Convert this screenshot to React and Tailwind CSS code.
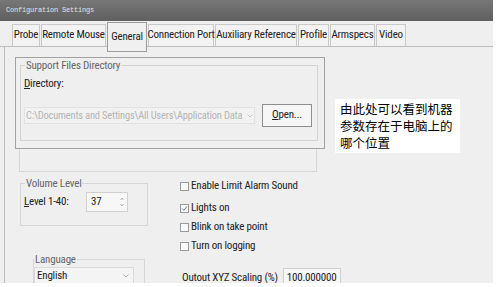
import React from "react";

const tabs = [
  ["Probe", 28],
  ["Remote Mouse", 65],
  ["General", 40],
  ["Connection Port", 66],
  ["Auxiliary Reference", 82],
  ["Profile", 31],
  ["Armspecs", 45],
  ["Video", 30],
];

function Chevron({ color = "#b8b8b8" }) {
  return (
    <svg width="6" height="4" viewBox="0 0 6 4" className="shrink-0">
      <path d="M0.5 0.5 L3 3 L5.5 0.5" fill="none" stroke={color} strokeWidth="1" />
    </svg>
  );
}

function Check({ checked, label }) {
  return (
    <div className="flex items-center h-[14px]">
      <div className="w-[9px] h-[9px] border border-[#9a9a9a] bg-[#f9f9f9] flex items-center justify-center">
        {checked && (
          <svg width="7" height="7" viewBox="0 0 7 7">
            <path d="M1 3.5 L2.8 5.3 L6 1.5" fill="none" stroke="#7a7a7a" strokeWidth="1" />
          </svg>
        )}
      </div>
      <span className="ml-[2px] text-[11px] text-[#222]">{label}</span>
    </div>
  );
}

export default function App() {
  return (
    <div className="w-[497px] h-[287px] bg-white overflow-hidden font-[family-name:'Roboto_Condensed','Liberation_Sans',sans-serif] tracking-[-0.2px]">
      <div className="w-[493px] h-[283px] bg-[#efefef] flex flex-col overflow-hidden">
        {/* Title bar */}
        <div className="h-[21px] shrink-0 bg-gradient-to-b from-[#777777] to-[#5f5f5f] flex items-center pl-[6px] font-[family-name:'Liberation_Mono',monospace] text-[7px] text-[#e2e2e2] tracking-[-0.2px]">
          Configuration Settings
        </div>

        {/* Tabs */}
        <div className="h-[26px] shrink-0 flex items-end pl-[12px] gap-[1px] border-b border-[#bdbdbd]">
          {tabs.map(([t, w]) =>
            t === "General" ? (
              <div
                key={t}
                style={{ width: w }}
                className="relative z-10 h-[30px] mb-[-6px] border border-[#9c9c9c] bg-[#f0f0f0] flex items-start justify-center pt-[6px] text-[11px] text-[#222]"
              >
                {t}
              </div>
            ) : (
              <div
                key={t}
                style={{ width: w }}
                className="h-[22px] border border-b-0 border-[#c9c9c9] bg-[#f3f3f3] flex items-center justify-center text-[11px] text-[#222] whitespace-nowrap"
              >
                {t}
              </div>
            )
          )}
        </div>

        {/* Panel */}
        <div className="flex-1 ml-[4px] border-l border-[#bdbdbd] flex flex-col">
          {/* Top section */}
          <div className="flex">
            <div className="flex flex-col pt-[10px]">
              <div className="ml-[10px] w-[310px] h-[92px] border border-[#a2a2a2] pl-[4px] pr-[6px]">
                <fieldset className="mt-[1px] h-[82px] border border-[#d3d3d3] pl-[3px] pr-[4px]">
                  <legend className="ml-[1px] px-[1px] text-[11px] text-[#666] leading-[13px]">
                    Support Files Directory
                  </legend>
                  <div className="mt-[5px] text-[11px] text-[#222] leading-[13px]">
                    <span className="underline">D</span>irectory:
                  </div>
                  <div className="mt-[14px] flex items-center gap-[7px]">
                    <div className="w-[231px] h-[17px] border border-[#e2e2e2] bg-[#f2f2f2] flex items-center pl-[1px] text-[10.5px] text-[#b4b4b4] whitespace-nowrap overflow-hidden">
                      <span>C:\Documents and Settings\All Users\Application Data</span>
                      <span className="ml-[5px] flex items-center">
                        <Chevron color="#c8c8c8" />
                      </span>
                    </div>
                    <div className="w-[50px] h-[23px] border border-[#8e8e8e] bg-[#f6f6f6] flex items-center justify-center text-[11px] text-[#222]">
                      <span>
                        <span className="underline">O</span>pen...
                      </span>
                    </div>
                  </div>
                </fieldset>
              </div>
              <div className="ml-[14px] w-[298px] h-[23px] border-x border-b border-[#d8d8d8]" />
            </div>

            {/* Annotation */}
            <div className="ml-[10px] mt-[52px] w-[125px] h-[54px] bg-white pl-[5px] pt-[1px] font-[family-name:'Noto_Sans_CJK_SC',sans-serif] text-[12.5px] leading-[17px] text-black tracking-normal whitespace-nowrap">
              <div className="h-[17px]">由此处可以看到机器</div>
              <div className="h-[17px]">参数存在于电脑上的</div>
              <div className="h-[17px]">哪个位置</div>
            </div>
          </div>

          {/* Bottom section */}
          <div className="flex">
            <div className="flex flex-col">
              <fieldset className="ml-[15px] mt-[5px] w-[128px] h-[49px] border border-[#d6d6d6] pl-[3px]">
                <legend className="ml-[1px] px-[1px] text-[11px] text-[#666] leading-[13px]">
                  Volume Level
                </legend>
                <div className="flex items-center mt-[2px]">
                  <span className="w-[62px] text-[11px] text-[#222]">
                    <span className="underline">L</span>evel 1-40:
                  </span>
                  <div className="w-[42px] h-[20px] border border-[#d0d0d0] bg-[#f7f7f7] flex items-center justify-between pl-[4px] pr-[3px] text-[11px] text-[#222]">
                    <span>37</span>
                    <svg width="4" height="12" viewBox="0 0 4 12">
                      <path d="M0.5 4 L2 2 L3.5 4" fill="none" stroke="#a8a8a8" strokeWidth="0.9" />
                      <path d="M0.5 8 L2 10 L3.5 8" fill="none" stroke="#a8a8a8" strokeWidth="0.9" />
                    </svg>
                  </div>
                </div>
              </fieldset>
              <fieldset className="ml-[28px] mt-[27px] w-[112px] h-[40px] border border-[#d6d6d6] pl-[0px]">
                <legend className="ml-[0px] px-[1px] text-[11px] text-[#666] leading-[13px]">
                  Language
                </legend>
                <div className="mt-[1px] w-[100px] h-[18px] border border-[#dadada] bg-[#f4f4f4] flex items-center justify-between pl-[2px] pr-[4px] text-[11px] text-[#222]">
                  <span>English</span>
                  <Chevron color="#aaaaaa" />
                </div>
              </fieldset>
            </div>

            <div className="ml-[32px] mt-[7px] flex flex-col">
              <Check label="Enable Limit Alarm Sound" />
              <div className="h-[8px]" />
              <Check checked label="Lights on" />
              <div className="h-[5px]" />
              <Check label="Blink on take point" />
              <div className="h-[5px]" />
              <Check label="Turn on logging" />
              <div className="mt-[15px] ml-[2px] flex items-center">
                <span className="text-[11px] text-[#222] whitespace-nowrap">Outout XYZ Scaling (%)</span>
                <div className="ml-[5px] w-[58px] h-[20px] border border-[#cfcfcf] bg-[#f7f7f7] flex items-center pl-[3px] text-[11px] text-[#222]">
                  100.000000
                </div>
              </div>
            </div>
          </div>
        </div>
      </div>
    </div>
  );
}
